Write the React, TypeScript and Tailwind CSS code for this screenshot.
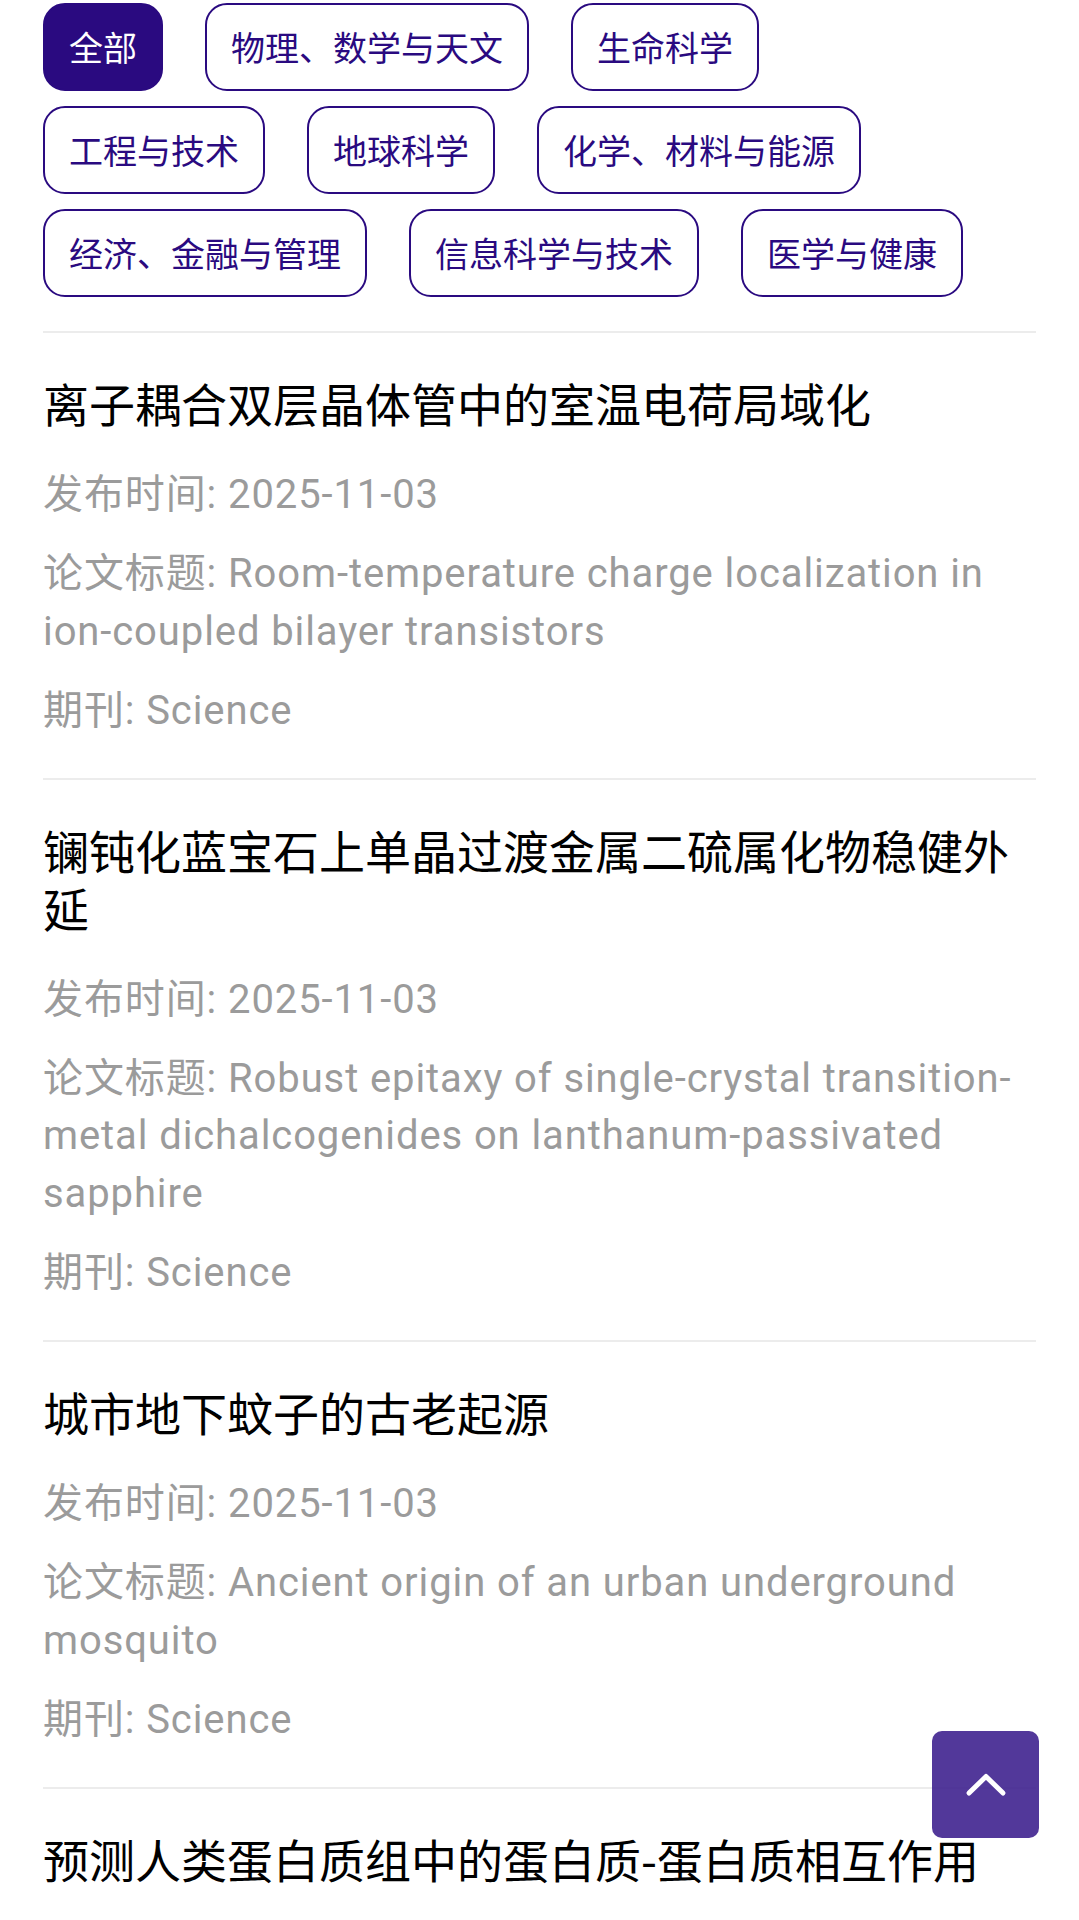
import React from "react";

const rows: string[][] = [
  ["全部", "物理、数学与天文", "生命科学"],
  ["工程与技术", "地球科学", "化学、材料与能源"],
  ["经济、金融与管理", "信息科学与技术", "医学与健康"],
];

type Item = { title: string; date?: string; paper?: string; journal?: string };

const items: Item[] = [
  {
    title: "离子耦合双层晶体管中的室温电荷局域化",
    date: "2025-11-03",
    paper: "Room-temperature charge localization in ion-coupled bilayer transistors",
    journal: "Science",
  },
  {
    title: "镧钝化蓝宝石上单晶过渡金属二硫属化物稳健外延",
    date: "2025-11-03",
    paper: "Robust epitaxy of single-crystal transition-metal dichalcogenides on lanthanum-passivated sapphire",
    journal: "Science",
  },
  {
    title: "城市地下蚊子的古老起源",
    date: "2025-11-03",
    paper: "Ancient origin of an urban underground mosquito",
    journal: "Science",
  },
  {
    title: "预测人类蛋白质组中的蛋白质-蛋白质相互作用",
  },
];

const FONT = { fontFamily: 'Roboto, "Noto Sans CJK SC", sans-serif' };

export default function App() {
  return (
    <div className="min-h-screen bg-white" style={FONT}>
      <div className="px-[43px] pt-[3px]">
        <div className="flex flex-col gap-y-[15px]">
          {rows.map((row, ri) => (
            <div key={ri} className="flex gap-x-[42px]">
              {row.map((t) => {
                const active = t === "全部";
                return (
                  <div
                    key={t}
                    className={
                      active
                        ? "h-[88px] flex items-center px-[24px] rounded-[22px] border-2 border-[#2a0a80] bg-[#2a0a80] text-white text-[34px] leading-none whitespace-nowrap"
                        : "h-[88px] flex items-center px-[24px] rounded-[22px] border-2 border-[#2a0a80] bg-white text-[#2a0a80] text-[34px] leading-none whitespace-nowrap"
                    }
                    style={{ fontFamily: '"Noto Sans CJK SC", sans-serif' }}
                  >
                    {t}
                  </div>
                );
              })}
            </div>
          ))}
        </div>
        <div className="mt-[34px] h-[2px] bg-[#ececec]" />
        {items.map((it, i) => (
          <div key={i}>
            <div className="pt-[41px] pb-[39px]">
              <div
                className="text-[46px] leading-[57.5px] text-black"
                style={{ fontFamily: '"Noto Sans CJK SC", sans-serif' }}
              >
                {it.title}
              </div>
              {it.date && (
                <div className="mt-[34.5px] flex flex-col gap-y-[21.5px] text-[40px] leading-[57.5px] tracking-[0.9px] text-[#9b9b9b]">
                  <div>发布时间: {it.date}</div>
                  <div>论文标题: {it.paper}</div>
                  <div>期刊: {it.journal}</div>
                </div>
              )}
            </div>
            <div className="h-[2px] bg-[#ececec]" />
          </div>
        ))}
      </div>
      <button
        className="fixed right-[40px] bottom-[82px] w-[107px] h-[107px] rounded-[10px] bg-[rgba(58,28,140,0.88)] flex items-center justify-center"
        aria-label="back to top"
      >
        <svg width="44" height="30" viewBox="0 0 44 30" className="-mt-[4px]">
          <path
            d="M5 25 L22 8.5 L39 25"
            fill="none"
            stroke="white"
            strokeWidth="5"
            strokeLinecap="round"
            strokeLinejoin="round"
          />
        </svg>
      </button>
    </div>
  );
}
